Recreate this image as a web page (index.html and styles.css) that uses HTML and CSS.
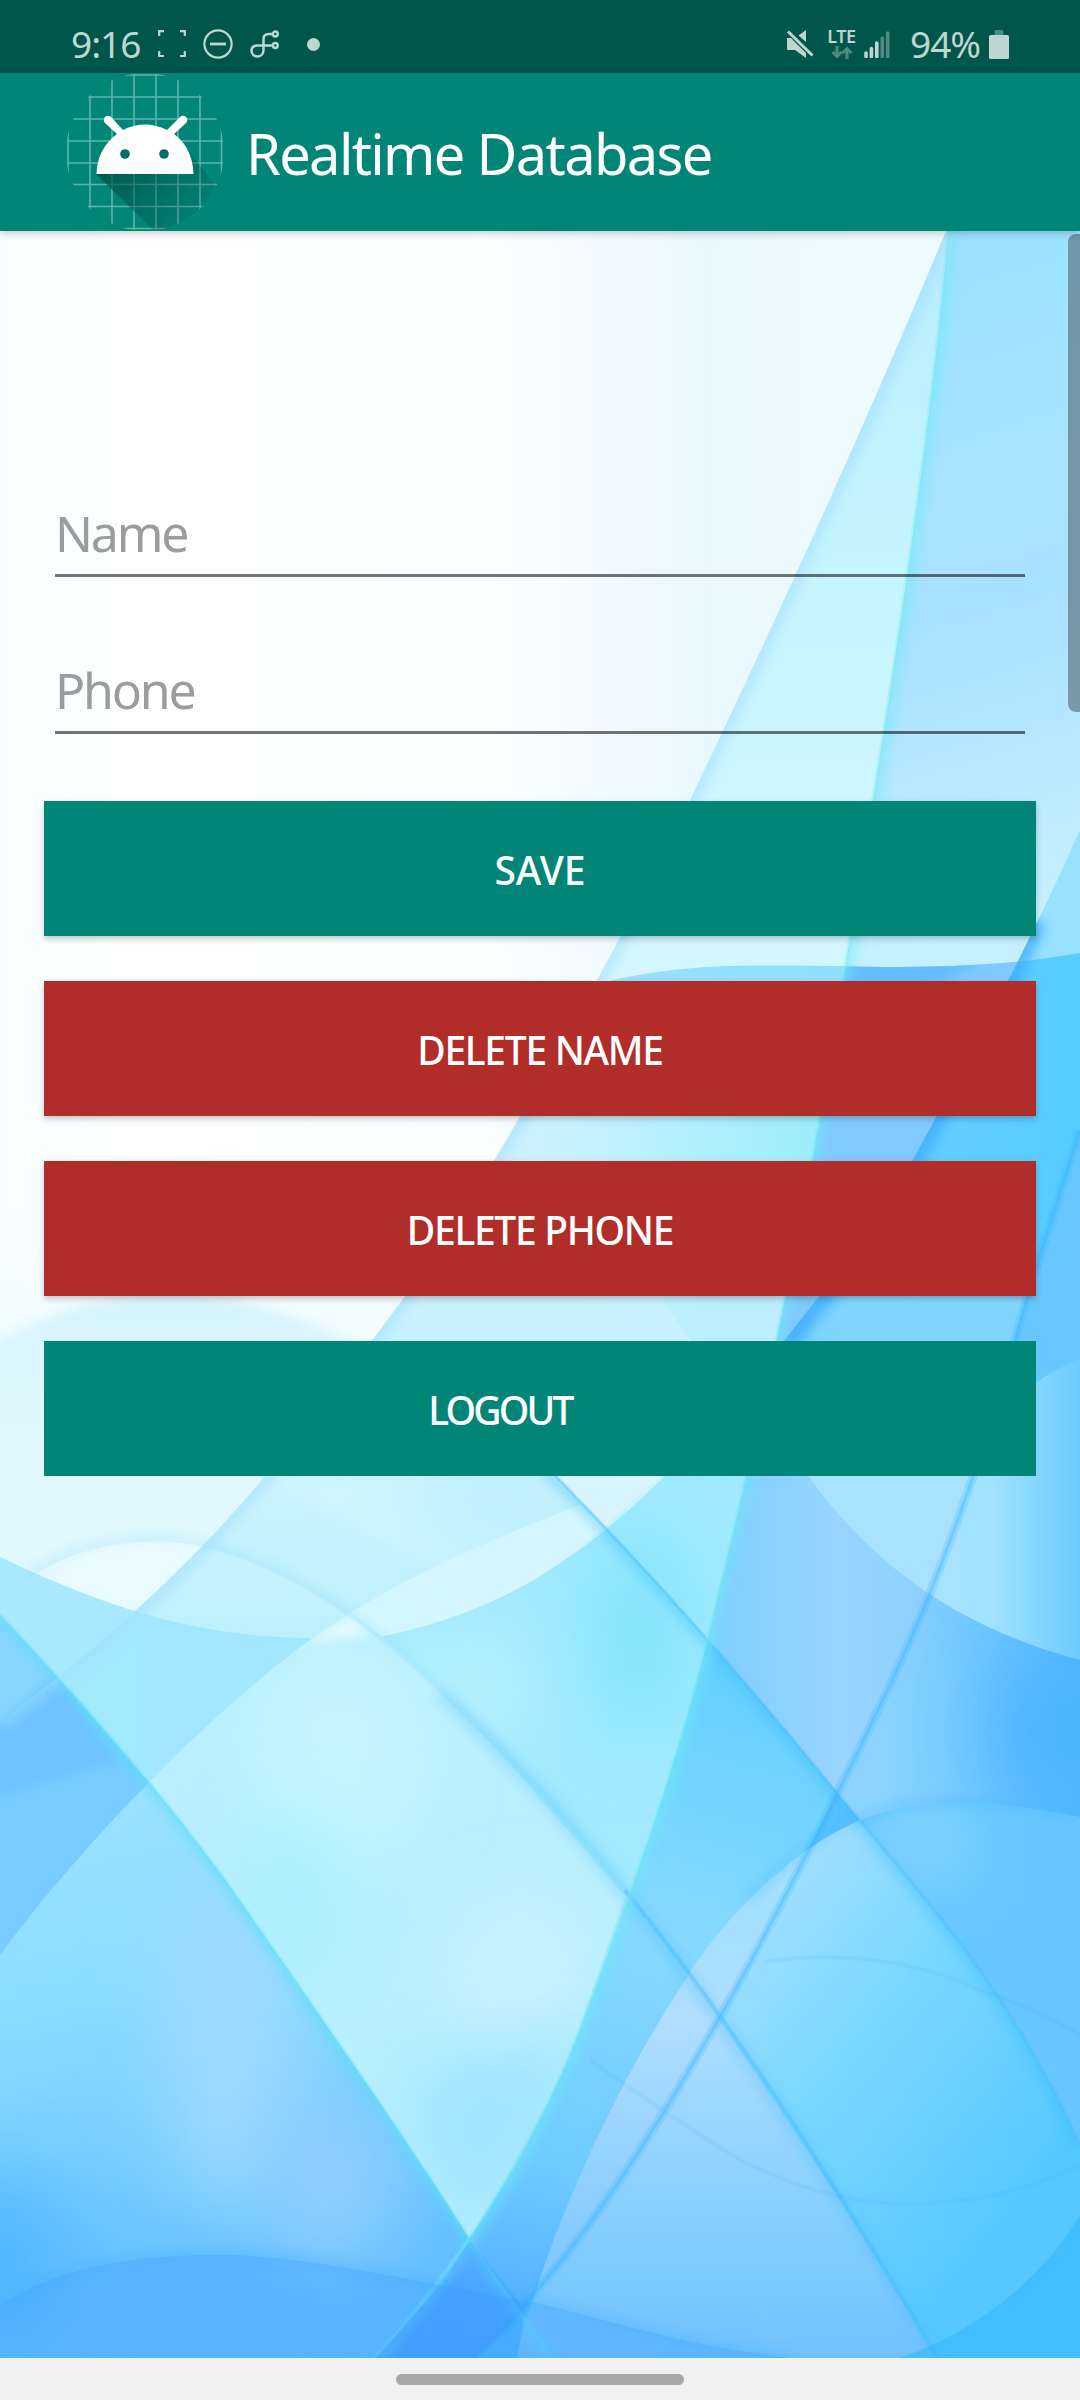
FILE: index.html
```html
<!DOCTYPE html>
<html lang="en">
<head>
<meta charset="utf-8">
<title>Realtime Database</title>
<link rel="stylesheet" href="styles.css">
</head>
<body>
<div class="phone">
  <header class="status">
    <div class="status-left">
      <span class="clock">9:16</span>
      <svg class="ic-scan" width="28" height="28" viewBox="0 0 28 28"><path d="M1.2 6V1.2H6M22 1.2H26.800V6M26.800 21V26H22M6 26H1.200V21"/></svg>
      <svg class="ic-dnd" width="30" height="30" viewBox="0 0 30 30"><circle cx="15" cy="15" r="13.600"/><path d="M7 15H23"/></svg>
      <svg class="ic-link" width="30" height="30" viewBox="0 0 30 30"><path d="M22.500 5H19C15 5 13.500 7 13.500 10V21C13.500 25 11 27.500 7.500 27.500S1.500 25 1.500 21.500S4 16.500 8 16.500H22.500"/><circle cx="25.300" cy="5" r="2.400"/><circle cx="25.300" cy="16.500" r="2.400"/></svg>
      <span class="dot"></span>
    </div>
    <div class="status-right">
      <svg class="ic-mute" width="28" height="28" viewBox="0 0 28 28"><path class="solid" d="M1 8H5L20 23V28L9 20H2Q1 20 1 18.500ZM20 0V12L12.500 5.500Z"/><path d="M2 1.500L26.500 25.500"/></svg>
      <div class="lte"><span>LTE</span><svg width="22" height="13" viewBox="0 0 22 13"><path d="M6 0V10M1.500 6L6 10.500L10.500 6M16 13V3M11.500 7L16 2.500L20.500 7"/></svg></div>
      <svg class="ic-signal" width="26" height="27" viewBox="0 0 26 27"><path d="M2 22V25.500M7.400 17.500V25.500M12.800 12V25.500"/><path class="dim" d="M18.300 7V25.500M23.700 2V25.500"/></svg>
      <span class="percent">94%</span>
      <svg class="ic-batt" width="20" height="29" viewBox="0 0 20 29"><path class="dim" d="M5.500 5V1.500Q5.500 0 7 0H13Q14.500 0 14.500 1.500V5Z"/><rect y="5" width="20" height="24" rx="1.500"/></svg>
    </div>
  </header>

  <div class="appbar">
    <svg class="logo" width="156" height="156" viewBox="0 0 156 156">
      <defs>
        <clipPath id="disc"><circle cx="78" cy="78" r="79"/></clipPath>
        <linearGradient id="cast" x1="30" y1="70" x2="130" y2="150" gradientUnits="userSpaceOnUse"><stop offset="0" stop-color="#004f45" stop-opacity=".9"/><stop offset="1" stop-color="#004f45" stop-opacity=".08"/></linearGradient>
      </defs>
      <g clip-path="url(#disc)">
        <path class="grid" d="M1 52V104M23 0V156M45 0V156M67 0V156M89 0V156M111 0V156M133 0V156M154.500 52V104M52 1H104M0 23H156M0 45H156M0 67H156M0 89H156M0 110.500H156M0 132.500H156M52 154.500H104"/>
        <path fill="url(#cast)" d="M29 100L88 158Q130 150 148 111L121 76L125 100Z"/>
      </g>
      <path class="head" d="M29.500 100C30 82 38 69 50 60L38 49A4 4 0 0 1 44 43L56 56Q78 45 100 56L113 43A4 4 0 0 1 119 49L107 60C119 69 126 82 126.500 100Z"/>
      <circle class="eye" cx="58" cy="80" r="4.800"/><circle class="eye" cx="97" cy="80" r="4.800"/>
    </svg>
    <h1>Realtime Database</h1>
  </div>

  <main class="screen">
    <svg class="wallpaper" viewBox="0 231 1080 2127" preserveAspectRatio="none" aria-hidden="true">
      <defs>
        <filter id="soft" x="-10%" y="-10%" width="120%" height="120%"><feGaussianBlur stdDeviation="6"/></filter>
        <filter id="haze" x="-100%" y="-100%" width="300%" height="300%"><feGaussianBlur stdDeviation="38"/></filter>
        <path id="a" d="M948 231C935 400 893 690 843 980C805 1220 765 1400 709 1633C675 1775 628 1900 578 2035C540 2130 480 2240 375 2358"/>
        <path id="c" d="M1080 830C1040 920 985 1030 912 1161C860 1250 750 1390 665 1476C590 1550 480 1640 310 1638C190 1638 90 1600 0 1557"/>
        <path id="e" d="M1080 1130C1055 1210 1035 1270 1014 1341C960 1540 900 1670 837 1793C770 1930 650 2160 537 2290C520 2315 500 2335 475 2358"/>
        <path id="f" d="M520 1440C600 1520 700 1625 837 1793C930 1905 1010 1990 1080 2145"/>
        <path id="g" d="M28 1580C80 1540 160 1535 207 1548C330 1580 420 1670 530 1783C650 1910 800 2130 937 2358"/>
        <path id="i" d="M0 1615C90 1710 180 1815 239 1900C330 2030 420 2160 470 2240C500 2285 530 2325 553 2358"/>
        <clipPath id="aR"><path d="M948 231C935 400 893 690 843 980C805 1220 765 1400 709 1633C675 1775 628 1900 578 2035C540 2130 480 2240 375 2358H1080V231Z"/></clipPath>
        <clipPath id="bR"><path d="M946 231C880 390 800 570 690 800C640 905 560 1050 494 1161C420 1285 350 1370 265 1476C200 1555 110 1640 0 1722V2358H1080V231Z"/></clipPath>
        <clipPath id="cB"><path d="M1080 830C1040 920 985 1030 912 1161C860 1250 750 1390 665 1476C590 1550 480 1640 310 1638C190 1638 90 1600 0 1557V2358H1080Z"/></clipPath>
        <clipPath id="eR"><path d="M1080 1130C1055 1210 1035 1270 1014 1341C960 1540 900 1670 837 1793C770 1930 650 2160 537 2290C520 2315 500 2335 475 2358H1080Z"/></clipPath>
        <clipPath id="fL"><path d="M520 1440C600 1520 700 1625 837 1793C930 1905 1010 1990 1080 2145V2358H0V1440Z"/></clipPath>
        <clipPath id="gR"><path d="M28 1580C80 1540 160 1535 207 1548C330 1580 420 1670 530 1783C650 1910 800 2130 937 2358H1080V1440H28Z"/></clipPath>
        <clipPath id="hB"><path d="M620 1490C500 1535 390 1580 303 1645C190 1730 70 1860 0 1955V2358H1080V1490Z"/></clipPath>
        <clipPath id="iL"><path d="M0 1615C90 1710 180 1815 239 1900C330 2030 420 2160 470 2240C500 2285 530 2325 553 2358H0Z"/></clipPath>
        <clipPath id="jB"><path d="M1080 1817C1000 1800 920 1795 861 1820C790 1850 720 1920 682 1985C600 2110 540 2260 517 2358H1080Z"/></clipPath>
        <clipPath id="kB"><path d="M790 1450C850 1540 930 1620 1080 1660V2358H500V1450Z"/></clipPath>
        <clipPath id="dB"><path d="M560 995C680 955 780 967 900 967C970 967 1030 962 1080 953V2358H0V995Z"/></clipPath>
        <linearGradient id="sky" x1="0" y1="0" x2="1" y2="0"><stop offset="0" stop-color="#f8feff"/><stop offset=".12" stop-color="#fefefe"/><stop offset=".45" stop-color="#fcfeff"/><stop offset=".65" stop-color="#e9f8ff"/><stop offset=".85" stop-color="#effcff"/></linearGradient>
        <linearGradient id="low" gradientUnits="userSpaceOnUse" x1="0" y1="1150" x2="0" y2="1640"><stop offset="0" stop-color="#fbffff" stop-opacity="0"/><stop offset=".5" stop-color="#e8fbfe"/><stop offset="1" stop-color="#ddf7fe"/></linearGradient>
        <linearGradient id="dome" gradientUnits="userSpaceOnUse" x1="0" y1="1290" x2="0" y2="1560"><stop offset="0" stop-color="#d3f2fc"/><stop offset="1" stop-color="#dcf8fe" stop-opacity="0"/></linearGradient>
        <linearGradient id="band" gradientUnits="userSpaceOnUse" x1="0" y1="231" x2="0" y2="2358"><stop offset="0" stop-color="#b9ecff"/><stop offset=".15" stop-color="#c4f5fe"/><stop offset=".34" stop-color="#d4f6fe"/><stop offset=".5" stop-color="#dcf6fe"/><stop offset=".6" stop-color="#c9f3fe"/><stop offset=".7" stop-color="#b5effe"/><stop offset=".8" stop-color="#b0f0fe"/><stop offset=".92" stop-color="#9fe3ff"/><stop offset="1" stop-color="#8cd8ff"/></linearGradient>
        <linearGradient id="wave" gradientUnits="userSpaceOnUse" x1="420" y1="0" x2="840" y2="0"><stop offset="0" stop-color="#d6f0fd"/><stop offset=".35" stop-color="#c8f2fe"/><stop offset="1" stop-color="#98ecfb"/></linearGradient>
        <linearGradient id="fade" gradientUnits="userSpaceOnUse" x1="0" y1="1160" x2="0" y2="1330"><stop offset="0" stop-color="#c6f3ff" stop-opacity="0"/><stop offset="1" stop-color="#c9f1fe"/></linearGradient>
        <linearGradient id="right" gradientUnits="userSpaceOnUse" x1="900" y1="300" x2="1080" y2="900"><stop offset="0" stop-color="#9ce2ff"/><stop offset=".35" stop-color="#aae3ff"/><stop offset=".5" stop-color="#a8e0ff"/><stop offset="1" stop-color="#c5f1ff"/></linearGradient>
        <linearGradient id="deep" gradientUnits="userSpaceOnUse" x1="800" y1="0" x2="1080" y2="0"><stop offset="0" stop-color="#52b6ff"/><stop offset=".4" stop-color="#66ceff"/><stop offset="1" stop-color="#56ccff"/></linearGradient>
        <linearGradient id="pane" gradientUnits="userSpaceOnUse" x1="720" y1="0" x2="960" y2="0"><stop offset="0" stop-color="#80cfff"/><stop offset=".5" stop-color="#98d5ff"/><stop offset="1" stop-color="#88cdff"/></linearGradient>
        <linearGradient id="edge" gradientUnits="userSpaceOnUse" x1="880" y1="0" x2="1080" y2="0"><stop offset="0" stop-color="#8cd4ff"/><stop offset="1" stop-color="#52b8ff"/></linearGradient>
        <linearGradient id="edgeTop" gradientUnits="userSpaceOnUse" x1="900" y1="0" x2="1080" y2="0"><stop offset="0" stop-color="#9fe2ff"/><stop offset=".5" stop-color="#a2e3ff"/><stop offset="1" stop-color="#6bcbff"/></linearGradient>
        <linearGradient id="left" gradientUnits="userSpaceOnUse" x1="0" y1="1700" x2="120" y2="2300"><stop offset="0" stop-color="#a4e6ff"/><stop offset=".5" stop-color="#8bdcff"/><stop offset="1" stop-color="#64bfff"/></linearGradient>
        <linearGradient id="mid" gradientUnits="userSpaceOnUse" x1="700" y1="1650" x2="520" y2="2340"><stop offset="0" stop-color="#62cfff"/><stop offset=".4" stop-color="#86d9ff"/><stop offset=".75" stop-color="#6fcbff"/><stop offset="1" stop-color="#4fabff"/></linearGradient>
        <linearGradient id="bub" gradientUnits="userSpaceOnUse" x1="740" y1="1900" x2="1060" y2="2160"><stop offset="0" stop-color="#a4e0ff"/><stop offset=".45" stop-color="#78d7ff"/><stop offset="1" stop-color="#56c8ff"/></linearGradient>
        <linearGradient id="cone" gradientUnits="userSpaceOnUse" x1="700" y1="2050" x2="700" y2="2358"><stop offset="0" stop-color="#a8dcff"/><stop offset=".5" stop-color="#88d0ff"/><stop offset="1" stop-color="#70c2ff"/></linearGradient>
        <linearGradient id="sliver" gradientUnits="userSpaceOnUse" x1="0" y1="1900" x2="0" y2="2300"><stop offset="0" stop-color="#a2e0ff"/><stop offset=".3" stop-color="#b0deff"/><stop offset="1" stop-color="#78c6ff"/></linearGradient>
      </defs>

      <rect y="231" width="1080" height="2127" fill="url(#sky)"/>
      <rect x="-10" y="1150" width="1090" height="700" fill="url(#low)"/>
      <path d="M-20 1352C60 1300 150 1285 230 1300C310 1318 350 1335 400 1390V1580H-20Z" fill="url(#dome)" filter="url(#soft)"/>
      <path d="M50 1572C90 1550 150 1538 207 1550L140 1615C80 1600 60 1590 50 1572Z" fill="#e9fbff" filter="url(#soft)"/>
      <g clip-path="url(#cB)"><rect y="1500" width="400" height="300" fill="#a9e9ff"/></g>

      <g clip-path="url(#bR)">
        <rect y="231" width="1080" height="2127" fill="url(#band)"/>
        <g clip-path="url(#dB)"><rect y="950" x="400" width="500" height="400" fill="url(#wave)"/><rect y="1160" width="900" height="300" fill="url(#fade)"/></g>
        <g clip-path="url(#dB)"><path d="M560 990C680 960 780 970 900 970" fill="none" stroke="#8ddcff" stroke-width="34" opacity=".8" filter="url(#soft)"/></g>
        <path d="M610 1220L691 1341L700 1400H800V1220Z" fill="#baeeff" opacity=".8"/>
        <path d="M265 1476H560L709 1640L600 1560L490 1600Z" fill="#d8f8ff" opacity=".4" filter="url(#soft)"/>
        <path d="M400 1440H560L610 1530L480 1560Z" fill="#a9e8ff" opacity=".5" filter="url(#haze)"/>
        <path d="M551 1476H660L605 1527Z" fill="#dcf5ff" opacity=".8"/>
        <g clip-path="url(#cB)">
          <rect y="1300" width="800" height="970" fill="#a2eafe"/>
          <ellipse cx="640" cy="1630" rx="55" ry="110" fill="#84e5fd" filter="url(#haze)"/>
          <ellipse cx="470" cy="1690" rx="60" ry="60" fill="#b6f0fe" filter="url(#haze)"/>
          <path d="M150 1620H320L150 1780Z" fill="#a3e4ff" opacity=".7" filter="url(#soft)"/>
        </g>
        <g clip-path="url(#hB)">
          <path d="M578 1500C480 1540 410 1570 351 1612L375 1638C470 1620 550 1580 605 1525Z" fill="#d4f7ff"/>
          <path d="M351 1612C420 1662 530 1783 625 1897L560 2080L470 2240L240 1900L148 1780C220 1710 280 1655 351 1612Z" fill="#b9effe"/>
          <ellipse cx="340" cy="1750" rx="80" ry="100" fill="#c6f6ff" filter="url(#haze)"/>
          <ellipse cx="520" cy="1985" rx="55" ry="80" fill="#ccf2ff" filter="url(#haze)"/>
          <ellipse cx="290" cy="1900" rx="45" ry="90" fill="#a5f2ff" filter="url(#haze)" opacity=".8"/>
          <path d="M400 2080L610 2020L470 2260Z" fill="#98e2ff" filter="url(#haze)" opacity=".9"/>
          <path d="M303 1645L351 1612L372 1635Z" fill="#e2faff" filter="url(#soft)"/>
        </g>
      </g>

      <g clip-path="url(#iL)">
        <rect y="1600" width="560" height="760" fill="#78ccff"/>
        <path d="M0 1600V1722L58 1680Z" fill="#88d6ff"/>
        <path d="M-10 1730L60 1670L120 1760L-10 1800Z" fill="#69bfff" filter="url(#soft)" opacity=".6"/>
        <g clip-path="url(#hB)">
          <rect y="1780" width="560" height="580" fill="url(#left)"/>
          <ellipse cx="230" cy="2040" rx="70" ry="170" fill="#9cdaff" filter="url(#haze)"/>
          <ellipse cx="330" cy="2180" rx="70" ry="90" fill="#8eceff" filter="url(#haze)"/>
          <ellipse cx="0" cy="2260" rx="70" ry="80" fill="#4fb8ff" filter="url(#haze)"/>
        </g>
      </g>

      <g clip-path="url(#aR)">
        <rect x="370" y="231" width="710" height="2127" fill="url(#right)"/>
        <g clip-path="url(#dB)">
          <rect x="700" y="950" width="380" height="550" fill="#80caff"/>
          <path d="M840 950H1000L930 990H840Z" fill="#65bdff" filter="url(#soft)"/>
        </g>
        <g clip-path="url(#cB)">
          <rect x="700" y="820" width="380" height="150" fill="#98e2ff"/>
          <g clip-path="url(#dB)"><rect x="700" y="950" width="380" height="500" fill="url(#deep)"/></g>
          <path d="M820 1290L789 1341L760 1480H1000L1036 1290Z" fill="#80d5ff" filter="url(#soft)"/>
          <path d="M1036 921C1010 980 985 1030 912 1161C860 1250 820 1300 760 1380" fill="none" stroke="#3ba9ff" stroke-width="22" filter="url(#soft)" opacity=".7"/>
          <path d="M700 1410H1080V1700H700Z" fill="#a8e2ff"/>
        </g>
        <g clip-path="url(#eR)">
          <rect x="800" y="1130" width="280" height="250" fill="#66c8ff"/>
          <path d="M1080 1359Q1050 1370 1020 1395L960 1480V1700H1080Z" fill="url(#edgeTop)"/>
        </g>
        <g clip-path="url(#kB)">
          <rect x="500" y="1440" width="580" height="920" fill="url(#pane)"/>
          <g clip-path="url(#eR)">
            <rect x="500" y="1440" width="580" height="920" fill="url(#edge)"/>
            <ellipse cx="1060" cy="1730" rx="60" ry="80" fill="#4ab4ff" filter="url(#haze)"/>
          </g>
        </g>
        <g clip-path="url(#fL)">
          <rect x="370" y="1600" width="710" height="760" fill="url(#mid)"/>
          <g clip-path="url(#eR)"><rect x="370" y="1600" width="710" height="760" fill="#58c2ff"/></g>
        </g>
        <g clip-path="url(#jB)">
          <rect x="500" y="1790" width="580" height="570" fill="#66c6ff"/>
          <path d="M861 1820L920 1790L960 1800V1900L900 1860Z" fill="#90dbff" filter="url(#haze)"/>
          <g clip-path="url(#fL)">
            <rect x="500" y="1790" width="580" height="570" fill="url(#sliver)"/>
            <g clip-path="url(#eR)">
              <rect x="500" y="1790" width="580" height="570" fill="url(#cone)"/>
              <g clip-path="url(#gR)"><rect x="500" y="1790" width="580" height="570" fill="url(#bub)"/></g>
            </g>
          </g>
        </g>
      </g>

      <g fill="none">
        <g clip-path="url(#fL)"><use href="#f" stroke="#3dbdff" stroke-width="14" opacity=".4" filter="url(#soft)"/></g>
        <use href="#f" stroke="#40b9ff" stroke-width="3" opacity=".4"/>
        <use href="#e" stroke="#2eb0ff" stroke-width="9" opacity=".2"/><use href="#e" stroke="#2eb0ff" stroke-width="3" opacity=".3"/>
        <g clip-path="url(#gR)"><use href="#g" stroke="#6fcfff" stroke-width="12" opacity=".22" filter="url(#soft)"/></g>
        <path d="M440 1694C470 1722 500 1752 530 1783C650 1910 800 2130 937 2358" stroke="#3cb6ff" stroke-width="10" opacity=".28" filter="url(#soft)"/>
        <path d="M625 1890C730 2020 840 2190 937 2358" stroke="#3cb6ff" stroke-width="4" opacity=".35"/>
        <g clip-path="url(#aR)"><use href="#a" stroke="#6feaf8" stroke-width="16" opacity=".5" filter="url(#soft)"/></g>
        <use href="#a" stroke="#6feaf5" stroke-width="4" opacity=".3"/>
        <g clip-path="url(#iL)"><use href="#i" stroke="#5cdff6" stroke-width="12" opacity=".6" filter="url(#soft)"/></g>
        <use href="#i" stroke="#60e6f5" stroke-width="4" opacity=".3"/>
        <g clip-path="url(#bR)"><path d="M946 231C880 390 800 570 690 800C640 905 560 1050 494 1161C420 1285 350 1370 265 1476C200 1555 110 1640 0 1722" stroke="#9ddcff" stroke-width="16" opacity=".5" filter="url(#soft)"/></g>
        <path d="M747 1900C800 1845 861 1800 943 1802C1000 1803 1040 1810 1080 1817" stroke="#3cb4ff" stroke-width="8" opacity=".3" filter="url(#soft)"/>
        <path d="M765 1962Q880 1945 980 1990Q1040 2010 1080 2035M590 2060Q660 2110 740 2160Q840 2210 930 2203Q1010 2200 1080 2165" stroke="#3ca8ee" stroke-width="4" opacity=".1"/>
      </g>
      <path d="M0 2305C60 2265 140 2255 220 2255C310 2255 430 2285 537 2303C610 2320 680 2345 790 2358H0Z" fill="#3a9dff" opacity=".3"/>
      <path d="M0 2305C60 2265 140 2255 220 2255C310 2255 430 2285 537 2303C610 2320 680 2345 790 2358" fill="none" stroke="#35a8f8" stroke-width="10" opacity=".25" filter="url(#soft)"/>
      <path d="M441 2285L470 2240L525 2310L517 2358H375Z" fill="#2f8dff" opacity=".25"/>
      <path d="M1080 2215C1040 2280 980 2330 900 2358H1080Z" fill="#2fb6ff" opacity=".55"/>
    </svg>

    <div class="form">
      <input class="field" type="text" placeholder="Name">
      <input class="field" type="text" placeholder="Phone">
      <div class="actions">
        <button class="btn save">SAVE</button>
        <button class="btn delete">DELETE NAME</button>
        <button class="btn delete">DELETE PHONE</button>
        <button class="btn logout">LOGOUT</button>
      </div>
    </div>
    <div class="scrollbar"></div>
  </main>
  <nav class="gesture"><span class="pill"></span></nav>
</div>
</body>
</html>
```
FILE: styles.css
```css
* { box-sizing: border-box; }
body { margin: 0; font-family: "Noto Sans", "Open Sans", sans-serif; }
.phone { width: 1080px; height: 2400px; display: flex; flex-direction: column; overflow: hidden; }

.status { height: 73px; background: #00564b; color: #bfd5d1; display: flex; justify-content: space-between; padding: 15px 71px 0 71px; flex: none; }
.status-left, .status-right { display: flex; align-items: center; height: 58px; }
.status svg { fill: none; stroke: #bfd5d1; flex: none; display: block; }
.clock { font-size: 37px; line-height: 58px; width: 70px; white-space: nowrap; letter-spacing: -1px; }
.ic-scan { stroke-width: 2.2; margin-left: 17px; }
.ic-dnd { stroke-width: 2.2; margin-left: 17px; }
.ic-dnd path { stroke-width: 2.8; }
.ic-link { stroke-width: 2.5; margin-left: 17px; }
.dot { width: 13px; height: 13px; border-radius: 50%; background: #bfd5d1; margin-left: 27px; }
.ic-mute { stroke-width: 3; }
.status .ic-mute .solid { fill: #bfd5d1; stroke: none; }
.lte { margin-left: 13px; width: 29px; height: 30px; display: flex; flex-direction: column; align-items: center; }
.lte span { font-size: 18px; line-height: 14px; font-weight: 600; letter-spacing: -0.5px; }
.lte svg { margin-top: 3px; stroke: #4e8a80; stroke-width: 3; }
.ic-signal { margin-left: 8px; stroke-width: 3.6; stroke-linecap: round; }
.status .dim { stroke: #4e8a80; }
.percent { font-size: 37px; line-height: 58px; margin-left: 20px; width: 75px; white-space: nowrap; letter-spacing: -1px; }
.status .ic-batt { margin-left: 4px; fill: #bfd5d1; stroke: none; }
.status .ic-batt .dim { fill: #4e8a80; stroke: none; }

.appbar { height: 158px; background: #008577; display: flex; align-items: center; padding-left: 67px; flex: none; position: relative; z-index: 1; box-shadow: 0 2px 8px rgba(0, 0, 0, .22); }
.logo { display: block; flex: none; }
.grid { fill: none; stroke: #5fb4aa; stroke-width: 1.6; }
.head { fill: #fff; }
.eye { fill: #006e62; }
.appbar h1 { margin: 2px 0 0 23px; font-size: 56px; font-weight: 400; color: #fff; line-height: 76px; white-space: nowrap; letter-spacing: -1.65px; }

.screen { height: 2127px; position: relative; flex: none; overflow: hidden; }
.wallpaper { position: absolute; inset: 0; width: 1080px; height: 2127px; display: block; }
.form { position: relative; display: flex; flex-direction: column; padding: 232px 44px 0; }
.field { height: 114px; margin: 0 11px 43px; padding: 28px 0 0; border: 0; border-bottom: 3px solid rgba(0, 0, 0, .54); background: none; font: 400 50px "Noto Sans", sans-serif; letter-spacing: -2.2px; outline: 0; border-radius: 0; }
.field::placeholder { color: #9b9c9d; opacity: 1; }
.actions { display: flex; flex-direction: column; gap: 45px; padding-top: 24px; }
.btn { height: 135px; margin: 0; border: 0; color: #fff; font: 500 39px "Noto Sans", sans-serif; padding: 2px 0 0; box-shadow: 0 3px 6px rgba(0, 0, 0, .22); }
.save, .logout { background: #008577; }
.delete { background: #b02d29; letter-spacing: -1.3px; }
.logout { padding-right: 80px; box-shadow: none; letter-spacing: -2.8px; }
.scrollbar { position: absolute; right: 0; top: 3px; width: 12px; height: 478px; border-radius: 8px 0 0 8px; background: rgba(75, 90, 95, .55); }

.gesture { height: 42px; background: #f1f1f1; display: flex; align-items: center; justify-content: center; flex: none; }
.pill { width: 288px; height: 11px; border-radius: 6px; background: #a7a7a7; }
```
